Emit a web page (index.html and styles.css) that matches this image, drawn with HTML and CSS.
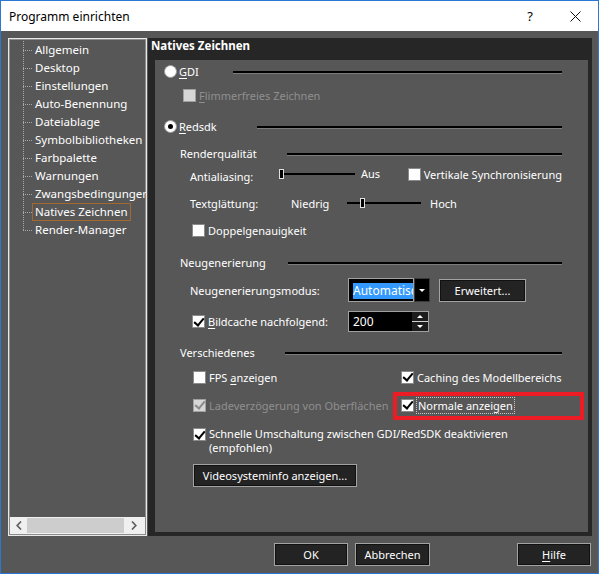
FILE: index.html
```html
<!DOCTYPE html>
<html lang="de">
<head>
<meta charset="utf-8">
<title>Programm einrichten</title>
<link rel="stylesheet" href="styles.css">
</head>
<body>
<div class="fenster">
    <div class="titelleiste">
        <span class="titel">Programm einrichten</span>
        <span class="frage">?</span>
        <span class="schliessen">
            <svg width="11" height="11" viewBox="0 0 11 11"><path d="M0.5 0.5L10.5 10.5M10.5 0.5L0.5 10.5" stroke="#111" stroke-width="1"/></svg>
        </span>
    </div>

    <div class="inhalt">
        <div class="haupt">
            <div class="baum">
                <ul class="baum-liste">
                    <li><span>Allgemein</span></li>
                    <li><span>Desktop</span></li>
                    <li><span>Einstellungen</span></li>
                    <li><span>Auto-Benennung</span></li>
                    <li><span>Dateiablage</span></li>
                    <li><span>Symbolbibliotheken</span></li>
                    <li><span>Farbpalette</span></li>
                    <li><span>Warnungen</span></li>
                    <li><span>Zwangsbedingungen</span></li>
                    <li class="aktiv"><span>Natives Zeichnen</span></li>
                    <li><span>Render-Manager</span></li>
                </ul>
                <div class="scroll">
                    <span class="scroll-pfeil links">
                        <svg width="6" height="9" viewBox="0 0 6 9"><path d="M5 0.5L1.2 4.5L5 8.5" fill="none" stroke="#606060" stroke-width="1.7"/></svg>
                    </span>
                    <span class="scroll-daumen"></span>
                    <span class="scroll-pfeil rechts">
                        <svg width="6" height="9" viewBox="0 0 6 9"><path d="M1 0.5L4.8 4.5L1 8.5" fill="none" stroke="#606060" stroke-width="1.7"/></svg>
                    </span>
                </div>
            </div>

            <div class="seite">
                <div class="seite-titel">Natives Zeichnen</div>
                <div class="rahmen">

                    <div class="zeile kopf">
                        <span class="kopf-text breit-gdi"><span class="rund"></span><span class="text"><u>G</u>DI</span></span>
                        <span class="linie"></span>
                    </div>
                    <div class="zeile flimmer">
                        <span class="kasten gesperrt"></span><span class="text grau"><u>F</u>limmerfreies Zeichnen</span>
                    </div>
                    <div class="zeile kopf redsdk">
                        <span class="kopf-text breit-red"><span class="rund an"></span><span class="text"><u>R</u>edsdk</span></span>
                        <span class="linie"></span>
                    </div>

                    <div class="abschnitt render">
                        <div class="zeile kopf">
                            <span class="kopf-text breit-render">Renderqualität</span>
                            <span class="linie"></span>
                        </div>
                        <div class="zeile einzug anti">
                            <span class="anti-label">Antialiasing:</span>
                            <span class="regler anti-regler"><span class="regler-knopf"></span></span>
                            <span class="aus-text">Aus</span>
                            <span class="kasten"></span><span class="text">Vertikale Synchronisierung</span>
                        </div>
                        <div class="zeile einzug glatt">
                            <span class="glatt-label">Textglättung:</span>
                            <span class="niedrig-text">Niedrig</span>
                            <span class="regler glatt-regler"><span class="regler-knopf" style="margin-left: 13px"></span></span>
                            <span class="hoch-text">Hoch</span>
                        </div>
                        <div class="zeile einzug doppel">
                            <span class="kasten"></span><span class="text">Doppelgenauigkeit</span>
                        </div>
                    </div>

                    <div class="abschnitt neu">
                        <div class="zeile kopf">
                            <span class="kopf-text breit-neu">Neugenerierung</span>
                            <span class="linie"></span>
                        </div>
                        <div class="zeile einzug modus">
                            <span class="feld-label">Neugenerierungsmodus:</span>
                            <span class="combo">
                                <span class="combo-text"><span class="markiert">Automatisch</span></span>
                                <span class="combo-knopf"><span class="dreieck-runter"></span></span>
                            </span>
                            <button class="knopf erweitert">Erweitert...</button>
                        </div>
                        <div class="zeile einzug bildcache">
                            <span class="feld-label"><span class="kasten an"></span><span class="text"><u>B</u>ildcache nachfolgend:</span></span>
                            <span class="spin">
                                <span class="spin-wert">200</span>
                                <span class="spin-knoepfe">
                                    <span class="spin-teil"><span class="dreieck-hoch"></span></span>
                                    <span class="spin-teil"><span class="dreieck-runter"></span></span>
                                </span>
                            </span>
                        </div>
                    </div>

                    <div class="abschnitt diverses">
                        <div class="zeile kopf">
                            <span class="kopf-text breit-div">Verschiedenes</span>
                            <span class="linie"></span>
                        </div>
                        <div class="zeile einzug fps">
                            <span class="spalte1"><span class="kasten"></span><span class="text">FPS <u>a</u>nzeigen</span></span>
                            <span class="spalte2"><span class="kasten an"></span><span class="text">Caching des Modellbereichs</span></span>
                        </div>
                        <div class="zeile einzug lade">
                            <span class="spalte1"><span class="kasten an gesperrt"></span><span class="text grau">Ladeverzögerung von Oberflächen</span></span>
                            <span class="spalte2 markierung"><span class="kasten an"></span><span class="text fokus">Normale anzeigen</span></span>
                        </div>
                        <div class="einzug schnell">
                            <span class="kasten an"></span>
                            <span class="text">Schnelle Umschaltung zwischen GDI/RedSDK deaktivieren<br>(empfohlen)</span>
                        </div>
                        <div class="einzug">
                            <button class="knopf video">Videosysteminfo anzeigen...</button>
                        </div>
                    </div>

                </div>
            </div>
        </div>

        <div class="knoepfe">
            <button class="knopf unten">OK</button>
            <button class="knopf unten">Abbrechen</button>
            <button class="knopf unten hilfe"><u>H</u>ilfe</button>
        </div>
    </div>
</div>
</body>
</html>
```

FILE: styles.css
```css
*{box-sizing: border-box;}

body{
    margin: 0;
    font-family: "Noto Sans", "Open Sans", sans-serif;
    font-size: 11px;
    color: #fff;
}

u{text-decoration-thickness: 1px; text-underline-offset: 2px;}

.fenster{
    width: 599px;
    height: 574px;
    border: 1px solid #2b78d4;
    background-color: #575757;
    display: flex;
    flex-direction: column;
}

/* Titelleiste */
.titelleiste{
    height: 30px;
    flex: none;
    background-color: #fff;
    color: #000;
    font-size: 12px;
    display: flex;
    align-items: center;
    padding-left: 8px;
}
.titel{flex: 1;}
.frage{font-size: 13px; margin-right: 37px;}
.schliessen{display: flex; margin-right: 17px;}

.inhalt{
    flex: 1;
    display: flex;
    flex-direction: column;
    padding: 7px 6px 7px 7px;
}

.haupt{
    height: 498px;
    display: flex;
    gap: 1px;
}

/* Baum links */
.baum{
    width: 139px;
    flex: none;
    border: 1px solid #e8e8e8;
    box-shadow: inset 0 0 0 1px #8c8c8c;
    display: flex;
    flex-direction: column;
}

.baum-liste{
    flex: 1;
    list-style: none;
    margin: 0;
    padding: 2px 0 0 14px;
    overflow: hidden;
}

.baum-liste li{
    height: 18px;
    display: flex;
    align-items: center;
    white-space: nowrap;
    font-size: 11.5px;
    background: repeating-linear-gradient(to bottom, #a8a8a8 0 1px, transparent 1px 2px) left top / 1px 100% no-repeat;
}
.baum-liste li:last-child{background-size: 1px 50%;}
.baum-liste li::before{
    content: "";
    flex: none;
    width: 9px;
    border-top: 1px dotted #a8a8a8;
}
.baum-liste li span{
    border: 1px solid transparent;
    padding: 0 2px;
    line-height: 16px;
}
.baum-liste li.aktiv span{border-color: #a2682e;}

.scroll{
    height: 17px;
    margin: 0 1px 1px 1px;
    background-color: #f0f0f0;
    display: flex;
    align-items: center;
}
.scroll-pfeil{
    display: flex;
    justify-content: center;
}
.scroll-pfeil.links{width: 17px;}
.scroll-pfeil.rechts{width: 20px;}
.scroll-daumen{
    width: 97px;
    height: 15px;
    background-color: #cdcdcd;
}

/* Seite rechts */
.seite{
    flex: 1;
    min-width: 0;
    background-color: #262626;
    padding: 0 4px 4px 7px;
    display: flex;
    flex-direction: column;
}
.seite-titel{
    height: 22px;
    line-height: 16px;
    padding-left: 3px;
    margin-left: -7px;
    font-size: 11.5px;
    font-weight: bold;
}
.rahmen{
    flex: 1;
    background-color: #575757;
    padding: 1px 26px 0 9px;
    overflow: hidden;
}

.zeile{
    height: 20px;
    display: flex;
    align-items: center;
    white-space: nowrap;
}

.kopf-text{display: flex; align-items: center; flex: none;}
.breit-gdi{width: 69px;}
.breit-red{width: 93px;}
.breit-render{width: 107px;}
.breit-neu{width: 108px;}
.breit-div{width: 105px;}

.linie{
    flex: 1;
    height: 3px;
    margin-top: 2px;
    border-top: 2px solid #000;
    border-bottom: 1px solid #7c7c7c;
}

.text{margin-left: 3px;}
.rund + .text{margin-left: 2px;}
.grau{color: #8f8f8f;}

.rund{
    width: 13px;
    height: 13px;
    border-radius: 50%;
    background-color: #fff;
    border: 1px solid #9a9a9a;
    display: flex;
    align-items: center;
    justify-content: center;
    flex: none;
}
.rund.an::after{
    content: "";
    width: 5px;
    height: 5px;
    border-radius: 50%;
    background-color: #000;
}

.kasten{
    width: 13px;
    height: 13px;
    flex: none;
    background-color: #fff;
    border: 1px solid #8a8a8a;
    display: flex;
    align-items: center;
    justify-content: center;
}
.kasten.an::after{
    content: "";
    width: 4px;
    height: 8px;
    margin-top: -2px;
    border: solid #000;
    border-width: 0 2px 2px 0;
    transform: rotate(40deg);
}
.kasten.gesperrt{background-color: #d6d6d6; border-color: #a0a0a0;}
.kasten.gesperrt.an::after{border-color: #8a8a8a;}

/* Abstände der Zeilen */
.flimmer{margin-top: 4px; padding-left: 19px;}
.redsdk{margin-top: 11px;}
.abschnitt{margin-left: 16px;}
.render{margin-top: 7px;}
.einzug{padding-left: 10px;}
.anti{margin-top: 1px;}
.glatt{margin-top: 9px;}
.doppel{margin-top: 7px; padding-left: 12px;}
.neu{margin-top: 12px;}
.modus{height: 24px; margin-top: 6px;}
.bildcache{height: 21px; margin-top: 9px;}
.diverses{margin-top: 10px;}
.fps{margin-top: 5px;}
.lade{margin-top: 8px;}

/* Regler */
.anti-label{width: 90px; padding-top: 5px;}
.regler{
    height: 12px;
    display: flex;
    align-items: center;
    background: linear-gradient(#000, #000) left 5px / 100% 2px no-repeat;
}
.anti-regler{width: 76px;}
.glatt-regler{width: 74px;}
.regler-knopf{
    width: 5px;
    height: 10px;
    background-color: #000;
    border: 1px solid #e0e0e0;
}
.aus-text{width: 53px; padding-left: 6px; margin-top: -2px;}
.glatt-label{width: 101px;}
.niedrig-text{width: 56px;}
.hoch-text{margin-left: 9px;}

/* Neugenerierung */
.feld-label{width: 158px; display: flex; align-items: center;}
.bildcache .feld-label{padding-left: 2px;}

.combo{
    width: 82px;
    height: 24px;
    display: flex;
    background-color: #000;
}
.combo-text{
    flex: 1;
    border: 1px solid #a0a0a0;
    padding: 3px 0 0 4px;
    overflow: hidden;
    font-size: 12px;
}
.markiert{
    background-color: #3399ff;
    display: inline-block;
    line-height: 16px;
}
.combo-knopf{
    width: 16px;
    border: 1px solid #3a3a3a;
    display: flex;
    align-items: center;
    justify-content: center;
}
.dreieck-runter{
    width: 0;
    height: 0;
    border-left: 3px solid transparent;
    border-right: 3px solid transparent;
    border-top: 3px solid #fff;
}
.dreieck-hoch{
    width: 0;
    height: 0;
    border-left: 3px solid transparent;
    border-right: 3px solid transparent;
    border-bottom: 3px solid #fff;
}

.knopf{
    font-family: inherit;
    font-size: 11px;
    color: #fff;
    background-color: #232323;
    border: 1px solid #a3a3a3;
    box-shadow: inset 0 0 0 1px #111;
    padding: 0;
    height: 23px;
}
.erweitert{width: 87px; margin-left: 9px;}

.spin{
    width: 81px;
    height: 21px;
    background-color: #000;
    border: 1px solid #a0a0a0;
    display: flex;
}
.spin-wert{flex: 1; padding-left: 4px; line-height: 19px; font-size: 12px;}
.spin-knoepfe{
    width: 16px;
    display: flex;
    flex-direction: column;
}
.spin-teil{
    flex: 1;
    background-color: #1c1c1c;
    display: flex;
    align-items: center;
    justify-content: center;
}
.spin-teil + .spin-teil{border-top: 1px solid #d0d0d0;}

/* Verschiedenes */
.spalte1{width: 211px; display: flex; align-items: center; padding-left: 3px;}
.spalte2{display: flex; align-items: center; position: relative;}
.fokus{
    margin-left: 2px;
    padding: 0 1px;
    border: 1px dotted #c8c8c8;
    line-height: 15px;
}
/* roter Rahmen um "Normale anzeigen" */
.markierung::after{
    content: "";
    box-sizing: border-box;
    position: absolute;
    left: -8px;
    top: -5px;
    width: 191px;
    height: 28px;
    border: 4px solid #ed1c24;
}

.schnell{
    margin-top: 12px;
    display: flex;
    align-items: flex-start;
    padding-left: 13px;
    line-height: 14px;
}
.schnell .kasten{margin-top: 1px;}

.video{width: 164px; margin: 9px 0 0 3px;}

/* untere Knöpfe */
.knoepfe{
    margin-top: 7px;
    display: flex;
    justify-content: flex-end;
    gap: 7px;
    padding-right: 1px;
}
.unten{width: 74px;}
.unten + .unten{width: 75px;}
.unten.hilfe{width: 74px; margin-left: 80px;}
```
